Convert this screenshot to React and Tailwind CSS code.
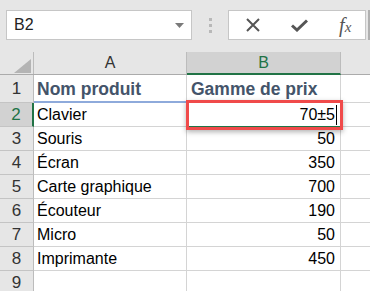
import React from "react";

const rows = [
  ["Nom produit", "", true],
  ["Clavier", "70±5"],
  ["Souris", "50"],
  ["Écran", "350"],
  ["Carte graphique", "700"],
  ["Écouteur", "190"],
  ["Micro", "50"],
  ["Imprimante", "450"],
  ["", ""],
];

export default function App() {
  const font = { fontFamily: '"Liberation Sans", Arial, sans-serif' };
  return (
    <div className="w-[370px] h-[291px] overflow-hidden bg-white relative" style={font}>
      {/* Top bar */}
      <div className="h-[52px] bg-[#e6e6e6] flex items-start pt-[10px] pl-[6px]">
        <div className="w-[186px] h-[30px] bg-white border border-[#c6c6c6] flex items-center justify-between pl-[7px] pr-[7px]">
          <span className="text-[16px] text-[#222] leading-none">B2</span>
          <svg width="9" height="5" viewBox="0 0 9 5"><path d="M0 0 L9 0 L4.5 5 Z" fill="#7a7a7a" /></svg>
        </div>
        <div className="w-[37px] h-[30px] flex flex-col items-center justify-center gap-[3px] pl-[1px]">
          <div className="w-[3px] h-[3px] bg-[#b8b8b8]" />
          <div className="w-[3px] h-[3px] bg-[#b8b8b8]" />
          <div className="w-[3px] h-[3px] bg-[#b8b8b8]" />
        </div>
        <div className="w-[138px] h-[30px] bg-white border border-[#c6c6c6] flex items-center">
          <div className="w-[46px] flex justify-center pl-[2px]">
            <svg width="14" height="14" viewBox="0 0 14 14"><path d="M1 1 L13 13 M13 1 L1 13" stroke="#555" strokeWidth="2" /></svg>
          </div>
          <div className="w-[44px] flex justify-center pl-[4px]">
            <svg width="17" height="13" viewBox="0 0 17 13"><path d="M1 6.5 L6 11 L16 1.5" stroke="#555" strokeWidth="3" fill="none" /></svg>
          </div>
          <div className="flex-1 flex justify-center pl-[6px]">
            <span className="text-[20px] italic text-[#555] leading-none" style={{ fontFamily: '"Liberation Serif", serif' }}>f<span className="text-[15px]">x</span></span>
          </div>
        </div>
        <div className="w-[2px] h-[30px] ml-[2px] bg-[#b0b0b0]" />
      </div>

      {/* Column header row */}
      <div className="flex h-[23px] bg-[#e6e6e6] border-b border-[#ababab]">
        <div className="w-[34px] border-r border-[#bcbcbc] relative">
          <svg className="absolute left-[14px] top-[7px]" width="18" height="14" viewBox="0 0 18 14"><path d="M17 0 L17 14 L0 14 Z" fill="#b4b4b4" /></svg>
        </div>
        <div className="w-[153px] border-r border-[#bcbcbc] flex items-center justify-center text-[16px] text-[#333]">A</div>
        <div className="w-[154px] bg-[#d2d2d2] border-r border-[#bcbcbc] border-b-2 border-b-[#217346] flex items-center justify-center text-[16px] text-[#217346] -mb-px">B</div>
        <div className="flex-1" />
      </div>

      {/* Rows */}
      {rows.map(([a, b, hdr], i) => {
        const active = i === 1;
        const h = i === 0 ? "h-[28px]" : "h-[24px]";
        return (
          <div key={i} className={`flex ${h}`}>
            <div
              className={`w-[34px] flex items-center justify-center text-[17px] border-b border-[#c4c4c4] ${
                active ? "bg-[#d2d2d2] border-r-2 border-r-[#217346] text-[#217346]" : "bg-[#e6e6e6] border-r border-r-[#bcbcbc] text-[#333]"
              }`}
            >
              {i + 1}
            </div>
            {hdr ? (
              <div className="w-[153px] border-r border-[#d4d4d4] border-b-2 border-b-[#8eaadb] flex items-center pl-[3px] pt-[2px] text-[17.5px] font-bold text-[#44546a]">
                {a}
              </div>
            ) : (
              <div className="w-[153px] border-r border-b border-[#d4d4d4] flex items-center pl-[3px] text-[16px] text-black">
                {a}
              </div>
            )}
            {hdr ? (
              <div className="w-[154px] border-r border-[#d4d4d4] border-b border-b-[#d4d4d4] flex items-center pl-[4px] pt-[2px] text-[17.5px] font-bold text-[#44546a] whitespace-nowrap">
                Gamme de prix
              </div>
            ) : (
              <div className="w-[154px] border-r border-b border-[#d4d4d4] flex items-center justify-end pr-[5px] text-[16px] text-black">
                {b}
              </div>
            )}
            <div className="flex-1 border-b border-[#d4d4d4]" />
          </div>
        );
      })}

      {/* Active cell highlight */}
      <div className="absolute left-[186px] top-[100px] w-[157px] h-[30px] border-[3px] border-[#f04a4a] shadow-[0_2px_5px_rgba(0,0,0,0.3)] pointer-events-none">
        <div className="absolute left-0 right-0 bottom-[0px] h-[1px] bg-[#217346]" />
        <div className="absolute right-[3px] top-[2px] w-[1px] h-[20px] bg-black" />
      </div>
    </div>
  );
}
